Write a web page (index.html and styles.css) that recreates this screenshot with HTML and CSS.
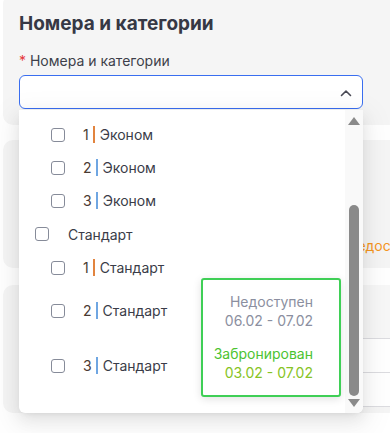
FILE: index.html
```html
<!DOCTYPE html>
<html>
<head>
    <title>Номера и категории</title>
    <link rel="stylesheet" href="styles.css">
</head>
<body>
    <div class="page">
        <div class="card card-top">
            <div class="card-title">Номера и категории</div>
            <div class="field-label"><span class="required">*</span> Номера и категории</div>
            <div class="select">
                <svg class="chevron" width="12" height="8" viewBox="0 0 12 8">
                    <path d="M1.5 6.5 L6 2 L10.5 6.5" fill="none" stroke="#4a4a55" stroke-width="1.6" stroke-linecap="round" stroke-linejoin="round"/>
                </svg>
            </div>
        </div>

        <div class="card card-status">
            <div class="status-row">
                <span>Статус</span>
                <span class="status-warn">Недоступен</span>
            </div>
        </div>

        <div class="card card-table">
            <div class="table">
                <div class="table-head"></div>
                <div class="table-row"></div>
                <div class="table-row"></div>
            </div>
        </div>

        <!-- dropdown of the select -->
        <div class="dropdown">
            <div class="options">
                <div class="option child">
                    <span class="checkbox"></span>
                    <span class="num">1</span><span class="bar orange"></span><span>Эконом</span>
                </div>
                <div class="option child">
                    <span class="checkbox"></span>
                    <span class="num">2</span><span class="bar blue"></span><span>Эконом</span>
                </div>
                <div class="option child">
                    <span class="checkbox"></span>
                    <span class="num">3</span><span class="bar blue"></span><span>Эконом</span>
                </div>
                <div class="option group">
                    <span class="checkbox"></span>
                    <span>Стандарт</span>
                </div>
                <div class="option child">
                    <span class="checkbox"></span>
                    <span class="num">1</span><span class="bar orange"></span><span>Стандарт</span>
                </div>
                <div class="option child tall">
                    <span class="checkbox"></span>
                    <span class="num">2</span><span class="bar blue"></span><span>Стандарт</span>
                </div>
                <div class="option child taller">
                    <span class="checkbox"></span>
                    <span class="num">3</span><span class="bar blue"></span><span>Стандарт</span>
                </div>
            </div>
            <div class="scrollbar">
                <div class="arrow arrow-up"></div>
                <div class="track">
                    <div class="thumb"></div>
                </div>
                <div class="arrow arrow-down"></div>
            </div>

            <div class="tooltip">
                <div class="tip-group">
                    <div class="tip-muted">Недоступен</div>
                    <div class="tip-muted">06.02 - 07.02</div>
                </div>
                <div class="tip-group">
                    <div class="tip-green">Забронирован</div>
                    <div class="tip-lime">03.02 - 07.02</div>
                </div>
            </div>
        </div>
    </div>
</body>
</html>
```

FILE: styles.css
```css
body {
    margin: 0;
    background-color: #fff;
    font-family: Inter, "Noto Sans", sans-serif;
    color: #383a46;
    overflow: hidden;
}
.page {
    position: relative;
    width: 420px;
    height: 433px;
    padding-left: 3px;
    display: flex;
    flex-direction: column;
    gap: 15px;
}
.card {
    background-color: #f5f5f5;
    border-radius: 10px;
    box-sizing: border-box;
}
.card-top {
    margin-top: -6px;
    height: 131px;
    padding: 17px 30px 0 16px;
}
.card-title {
    font-size: 19px;
    font-weight: 700;
    line-height: 26px;
    color: #363845;
}
.field-label {
    margin-top: 13px;
    font-size: 14px;
    line-height: 22px;
    color: #3d3f4a;
}
.required {
    color: #e5383b;
}
.select {
    margin-top: 3px;
    width: 344px;
    height: 34px;
    box-sizing: border-box;
    background-color: #fff;
    border: 1px solid #3a6ef0;
    border-radius: 6px;
    display: flex;
    align-items: center;
    justify-content: flex-end;
    padding-right: 10px;
}
.chevron {
    margin-top: 1px;
}
.card-status {
    height: 128px;
    padding: 95px 0 0 16px;
}
.status-row {
    display: grid;
    grid-template-columns: 328px auto;
    font-size: 14px;
    line-height: 22px;
}
.status-warn {
    color: #f5961e;
    white-space: nowrap;
}
.card-table {
    margin-top: 2px;
    height: 128px;
    padding: 0 0 0 16px;
}
.table {
    background-color: #fff;
}
.table-head {
    height: 53px;
    background-color: #f7f7f7;
    border-bottom: 1px solid #dcdce0;
}
.table-row {
    height: 33px;
    border-bottom: 1px solid #dcdce0;
}

/* dropdown */
.dropdown {
    position: absolute;
    left: 19px;
    top: 110px;
    width: 344px;
    height: 303px;
    background-color: #fff;
    border-radius: 0 0 6px 6px;
    box-shadow: 0 6px 16px 0 rgba(0, 0, 0, 0.08), 0 3px 6px -4px rgba(0, 0, 0, 0.12), 0 9px 28px 8px rgba(0, 0, 0, 0.05);
    display: flex;
    overflow: hidden;
}
.options {
    flex: 1;
    padding-top: 8px;
}
.option {
    display: flex;
    align-items: center;
    height: 33px;
    font-size: 14px;
    color: #3a3c48;
}
.option.child {
    padding-left: 32px;
}
.option.group {
    padding-left: 16px;
    height: 34px;
}
.option.tall {
    height: 53px;
}
.option.taller {
    height: 56px;
    padding-top: 1px;
    box-sizing: border-box;
}
.checkbox {
    width: 14px;
    height: 14px;
    box-sizing: border-box;
    border: 1px solid #868b99;
    border-radius: 3px;
    margin-right: 18px;
    background-color: #fff;
}
.group .checkbox {
    margin-right: 19px;
}
.num {
    color: #4a3a33;
}
.bar {
    width: 2px;
    height: 17px;
    margin: 0 5px 0 4px;
}
.bar.orange {
    background-color: #e2843f;
}
.bar.blue {
    background-color: #6fa6e2;
}
.scrollbar {
    width: 18px;
    background-color: #f9f9f9;
    display: flex;
    flex-direction: column;
    align-items: center;
}
.arrow {
    width: 0;
    height: 0;
    border-left: 6px solid transparent;
    border-right: 6px solid transparent;
}
.arrow-up {
    margin-top: 7px;
    border-bottom: 8px solid #8a8a8a;
}
.arrow-down {
    margin-bottom: 6px;
    border-top: 8px solid #8a8a8a;
}
.track {
    flex: 1;
    width: 100%;
    display: flex;
    flex-direction: column;
    align-items: center;
    padding: 80px 0 3px;
    box-sizing: border-box;
}
.thumb {
    flex: 1;
    width: 10px;
    background-color: #8a8a8a;
    border-radius: 5px;
}

/* tooltip over options */
.tooltip {
    position: absolute;
    left: 182px;
    top: 168px;
    width: 140px;
    height: 119px;
    box-sizing: border-box;
    border: 2px solid #3fcf56;
    border-radius: 3px;
    background-color: #fff;
    box-shadow: 0 2px 8px rgba(0, 0, 0, 0.12);
    padding: 13px 26px 0 0;
    text-align: right;
    font-size: 14px;
    line-height: 18.5px;
}
.tip-group + .tip-group {
    margin-top: 15px;
}
.tip-muted {
    color: #8b8fa0;
}
.tip-green {
    color: #4cc331;
}
.tip-lime {
    color: #86c324;
}
```
